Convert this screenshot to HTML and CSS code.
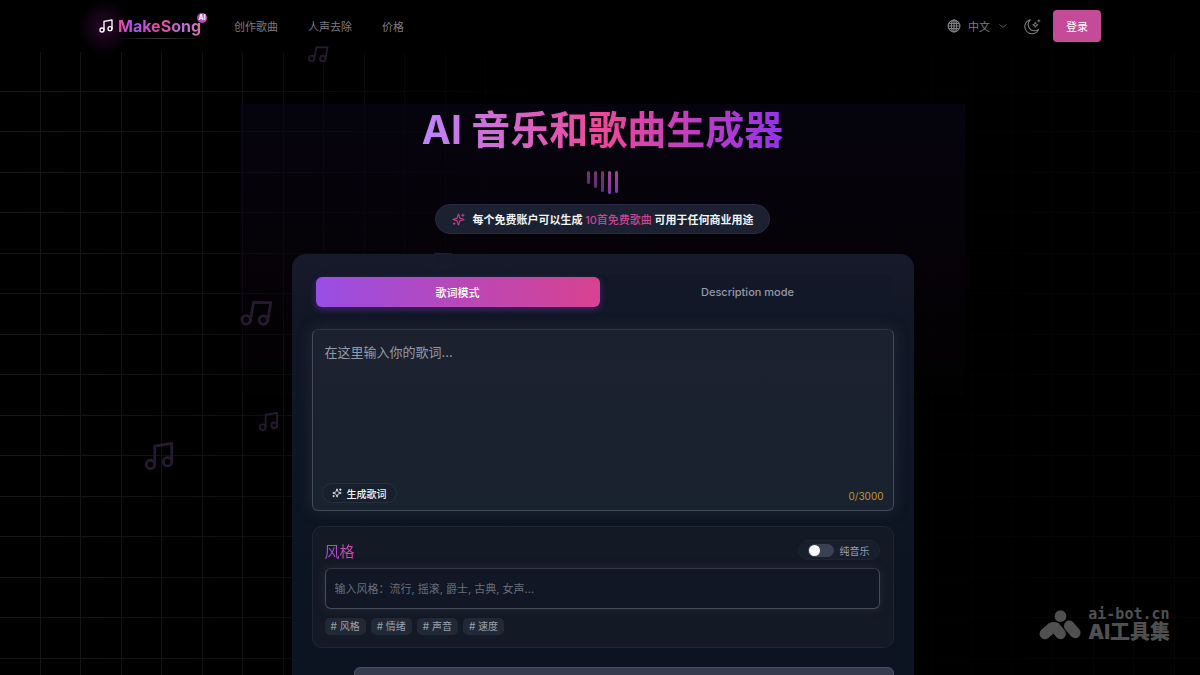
FILE: index.html
```html
<!DOCTYPE html>
<html lang="zh-CN">
<head>
<meta charset="utf-8">
<meta name="viewport" content="width=device-width, initial-scale=1">
<title>MakeSong AI</title>
<link rel="stylesheet" href="styles.css">
</head>
<body>
<svg class="defs" aria-hidden="true">
  <symbol id="note" viewBox="0 0 24 24"><path d="M9 18V5l12-2v13"/><circle cx="6" cy="18" r="3"/><circle cx="18" cy="16" r="3"/></symbol>
  <symbol id="sparkles" viewBox="0 0 24 24"><path d="M9.9 15.5A2 2 0 0 0 8.500 14.100l-6.100-1.600a.5.5 0 0 1 0-1L8.500 9.900A2 2 0 0 0 9.900 8.500l1.600-6.100a.5.5 0 0 1 1 0L14.100 8.500A2 2 0 0 0 15.500 9.900l6.100 1.600a.5.5 0 0 1 0 1L15.500 14.100a2 2 0 0 0-1.400 1.400l-1.600 6.100a.5.5 0 0 1-1 0z"/><path d="M20 2v4M22 4h-4M4 18v3M5.500 19.500h-3"/></symbol>
</svg>
<div class="page">
  <div class="grid"></div>
  <div class="glow"></div>

  <header class="header">
    <div class="bar">
      <a class="brand" href="#">
        <svg class="brand-icon"><use href="#note"/></svg>
        <span class="brand-name">MakeSong</span>
        <span class="brand-tag">AI</span>
      </a>
      <nav class="nav">
        <a href="#">创作歌曲</a>
        <a href="#">人声去除</a>
        <a href="#">价格</a>
      </nav>
      <div class="actions">
        <button class="lang" type="button">
          <svg class="globe" viewBox="0 0 24 24"><circle cx="12" cy="12" r="10"/><ellipse cx="12" cy="12" rx="4.500" ry="10"/><path d="M2 12h20M12 2v20M3.500 7.500h17M3.500 16.500h17"/></svg>
          <span>中文</span>
          <svg class="chevron" viewBox="0 0 12 12"><path d="M1 4l5 4 5-4"/></svg>
        </button>
        <button class="theme" type="button" aria-label="切换主题">
          <svg viewBox="0 0 24 24"><path d="M9 2.500A8 8 0 0 0 20.500 16 10 10 0 1 1 9 2.500z"/><path d="M16 6c.4 2.500 1 3.100 3.500 3.500-2.500.4-3.100 1-3.500 3.500-.4-2.500-1-3.100-3.500-3.500 2.500-.4 3.100-1 3.500-3.500zM21 2.500v3M19.500 4h3"/></svg>
        </button>
        <button class="login" type="button">登录</button>
      </div>
    </div>
  </header>

  <div class="notes" aria-hidden="true">
    <svg class="note n1"><use href="#note"/></svg>
    <svg class="note n2"><use href="#note"/></svg>
    <svg class="note n3"><use href="#note"/></svg>
    <svg class="note n4"><use href="#note"/></svg>
    <svg class="note n5"><use href="#note"/></svg>
  </div>

  <main class="main">
    <h1 class="title">AI 音乐和歌曲生成器</h1>
    <div class="bars" aria-hidden="true"><i></i><i></i><i></i><i></i><i></i></div>
    <p class="offer">
      <svg><use href="#sparkles"/></svg>
      <span>每个免费账户可以生成 <em>10首免费歌曲</em> 可用于任何商业用途</span>
    </p>

    <form class="card">
      <div class="tabs" role="tablist">
        <button class="tab active" type="button" role="tab" aria-selected="true">歌词模式</button>
        <button class="tab" type="button" role="tab" aria-selected="false">Description mode</button>
      </div>
      <div class="lyrics">
        <textarea aria-label="歌词" placeholder="在这里输入你的歌词..."></textarea>
        <div class="lyrics-foot">
          <button class="generate" type="button"><svg><use href="#sparkles"/></svg>生成歌词</button>
          <span class="count">0/3000</span>
        </div>
      </div>
      <section class="style">
        <div class="style-head">
          <label class="style-title" for="style">风格</label>
          <label class="pure"><input type="checkbox" role="switch"><span>纯音乐</span></label>
        </div>
        <input class="style-input" id="style" type="text" placeholder="输入风格：流行, 摇滚, 爵士, 古典, 女声...">
        <div class="tags">
          <button type="button"># 风格</button>
          <button type="button"># 情绪</button>
          <button type="button"># 声音</button>
          <button type="button"># 速度</button>
        </div>
      </section>
      <button class="submit" type="button" aria-label="生成"></button>
    </form>
  </main>

  <div class="watermark">
    <svg viewBox="0 0 44 30"><circle cx="22" cy="6" r="6"/><path d="M6 24L13 18Q15 17 17 18L22 24M31 16L37 23"/></svg>
    <div class="watermark-text"><span class="site">ai-bot.cn</span><span class="name">AI工具集</span></div>
  </div>
</div>
</body>
</html>
```
FILE: styles.css
```css
* { box-sizing: border-box; }

body {
  margin: 0;
  background: #000;
  color: #e5e7eb;
  font-family: Inter, "Noto Sans CJK SC", sans-serif;
  font-size: 11px;
}

button, input, textarea { font: inherit; color: inherit; }
button { border: 0; padding: 0; background: none; cursor: pointer; }
a { color: inherit; text-decoration: none; }
svg { fill: none; stroke: currentColor; stroke-width: 2; stroke-linecap: round; stroke-linejoin: round; flex: none; }

.defs { position: absolute; width: 0; height: 0; }
.page { position: relative; height: 100vh; overflow: hidden; }

/* Backdrop */
.grid {
  position: absolute;
  inset: 0;
  background-image:
    linear-gradient(90deg, transparent 40px, #161618 40px 41px, transparent 41px 80px, #161618 80px),
    linear-gradient(transparent 40px, #161618 40px 41px, transparent 41px 80px, #161618 80px);
  background-size: 81px 81px;
  background-position: 0 51px;
  -webkit-mask-image: linear-gradient(90deg, #000 0, rgba(0, 0, 0, .8) 16%, rgba(0, 0, 0, .25) 36%, transparent 46%, transparent 70%, rgba(0, 0, 0, .3) 100%);
  mask-image: linear-gradient(90deg, #000 0, rgba(0, 0, 0, .8) 16%, rgba(0, 0, 0, .25) 36%, transparent 46%, transparent 70%, rgba(0, 0, 0, .3) 100%);
}
.glow {
  position: absolute;
  top: 104px;
  left: 20%;
  right: 235px;
  height: 292px;
  background: linear-gradient(rgba(10, 6, 24, .55), rgba(11, 4, 16, .5) 50%, rgba(10, 3, 12, .4) 78%, rgba(4, 4, 4, .3));
}
.note { position: absolute; color: #251a31; }
.n1 { left: 307px; top: 43px; width: 22px; height: 22px; transform: rotate(10deg); }
.n2 { left: 239px; top: 296px; width: 34px; height: 34px; transform: rotate(10deg); }
.n3 { left: 257px; top: 410px; width: 23px; height: 23px; }
.n4 { left: 142px; top: 439px; width: 34px; height: 34px; }
.n5 { left: 421px; top: 248px; width: 32px; height: 32px; transform: rotate(10deg); }

/* Header */
.header { position: relative; background: #000; padding: 0 24px; }
.bar { display: flex; align-items: center; max-width: 1004px; height: 52px; margin: 0 auto; padding-right: 1px; }
.brand { position: relative; display: flex; align-items: center; gap: 4px; height: 25px; }
.brand::before {
  content: "";
  position: absolute;
  left: -20px;
  top: -14px;
  width: 54px;
  height: 54px;
  background: radial-gradient(closest-side, rgba(134, 25, 143, .3), transparent);
}
.brand::after {
  content: "";
  position: absolute;
  left: 20px;
  right: 0;
  bottom: 0;
  height: 1px;
  background: linear-gradient(90deg, transparent, #3c3c40, transparent);
}
.brand-icon { position: relative; width: 16px; height: 16px; color: #fff; }
.brand-name {
  position: relative;
  font-size: 16px;
  font-weight: 700;
  background: linear-gradient(90deg, #ec4899, #a855f7 20%, #ec4899 50%, #b070d8 75%, #e070a8);
  -webkit-background-clip: text;
  background-clip: text;
  color: transparent;
}
.brand-tag {
  position: absolute;
  top: -1px;
  right: -6px;
  width: 10px;
  height: 10px;
  border-radius: 50%;
  background: linear-gradient(90deg, #b040c8, #d04ac0);
  color: #fff;
  font-size: 7px;
  font-weight: 700;
  line-height: 10px;
  text-align: center;
}
.nav { display: flex; gap: 30px; margin-left: 33px; color: #7c7c80; }
.actions { display: flex; align-items: center; margin-left: auto; color: #7c7c80; }
.lang { display: flex; align-items: center; gap: 7px; }
.globe { width: 14px; height: 14px; }
.chevron { width: 8px; height: 8px; margin-left: 2px; stroke-width: 1; }
.theme { margin: 0 12px 0 17px; line-height: 0; }
.theme svg { width: 17px; height: 17px; stroke-width: 1.500; }
.login { width: 48px; height: 32px; border-radius: 4px; background: #c54a97; color: #fff; }

/* Hero */
.main { position: relative; display: flex; flex-direction: column; align-items: center; padding: 52px 24px 0; margin-left: 5px; }
.title {
  margin: 0;
  font-size: 39px;
  font-weight: 700;
  line-height: 52px;
  background: linear-gradient(90deg, #c084fc, #ec4899 50%, #9333ea);
  -webkit-background-clip: text;
  background-clip: text;
  color: transparent;
}
.bars { display: flex; gap: 4px; height: 24px; margin-top: 15px; }
.bars i { width: 3px; height: 13px; border-radius: 2px; background: linear-gradient(#a8468c, #7c3aa8); opacity: .75; }
.bars i:nth-child(2) { height: 17px; }
.bars i:nth-child(3) { height: 21px; }
.bars i:nth-child(4) { height: 23px; opacity: 1; }
.bars i:nth-child(5) { height: 22px; opacity: 1; }
.offer {
  display: flex;
  align-items: center;
  gap: 8px;
  height: 30px;
  margin: 9px 0 20px;
  padding: 0 16px;
  border: 1px solid #2c2748;
  border-radius: 15px;
  background: #1b2130;
  color: #f3f4f6;
  font-weight: 700;
}
.offer svg { width: 13px; height: 13px; color: #c23f88; }
.offer em { font-style: normal; font-weight: 500; color: #c94492; }

/* Generator card */
.card {
  display: flex;
  flex-direction: column;
  width: 100%;
  max-width: 622px;
  padding: 19px 20px 40px;
  border-radius: 14px;
  background: linear-gradient(rgba(24, 27, 44, .96), rgba(18, 24, 39, .97) 12%, rgba(13, 21, 35, .98) 60%, #0b1420 70%);
}
.tabs { display: grid; grid-template-columns: 1fr 1fr; gap: 6px; padding: 3px; border: 1px solid #151a2b; border-radius: 10px; background: #121828; }
.tab { height: 30px; border-radius: 6px; color: #949aa8; font-weight: 500; }
.tab.active { background: linear-gradient(90deg, #984ee4, #d8428f); color: #fff; box-shadow: 0 2px 6px rgba(126, 50, 190, .5); }
.lyrics {
  display: flex;
  flex-direction: column;
  height: 182px;
  margin-top: 18px;
  border: 1px solid #434a57;
  border-top-color: #2c353f;
  border-radius: 6px;
  background: linear-gradient(#1c212e, #19222f);
  box-shadow: 0 0 14px rgba(58, 60, 76, .5);
}
.lyrics textarea {
  flex: 1;
  width: 100%;
  padding: 13px 12px;
  border: 0;
  outline: 0;
  resize: none;
  background: none;
  font-size: 13px;
  line-height: 18px;
}
.lyrics textarea::placeholder { color: #949aa5; opacity: 1; }
.lyrics-foot { display: flex; align-items: center; justify-content: space-between; padding: 0 9px 7px; font-size: 10px; }
.generate { display: flex; align-items: center; gap: 5px; height: 20px; padding: 0 9px; border: 1px solid #272f3d; border-radius: 10px; background: #18202d; color: #f3f4f6; font-weight: 500; }
.generate svg { width: 10px; height: 10px; }
.count { padding-top: 6px; color: #bd9738; }

.style { margin-top: 15px; padding: 12px 13px 12px 12px; border: 1px solid #1c2733; border-radius: 10px; background: #141926; }
.style-head { display: flex; align-items: center; justify-content: space-between; height: 22px; }
.style-title {
  font-size: 15px;
  background: linear-gradient(90deg, #9a4fe0, #d9479a);
  -webkit-background-clip: text;
  background-clip: text;
  color: transparent;
}
.pure { display: flex; align-items: center; gap: 6px; height: 20px; padding: 0 9px; border: 1px solid #1e2432; border-radius: 10px; background: #181e2b; color: #9ca0ac; font-size: 10px; }
.pure input { appearance: none; display: flex; align-items: center; width: 26px; height: 13px; margin: 0; padding: 0 1px; border-radius: 7px; background: #3a4154; }
.pure input::before { content: ""; width: 11px; height: 11px; border-radius: 50%; background: #fff; }
.pure input:checked { justify-content: flex-end; }
.style-input {
  display: block;
  width: 100%;
  height: 41px;
  margin-top: 7px;
  padding: 0 9px;
  border: 1px solid #474c5a;
  border-top-color: #333844;
  border-radius: 6px;
  outline: 0;
  background: #111724;
  box-shadow: 0 0 10px rgba(58, 60, 76, .45);
}
.style-input::placeholder { color: #686e7b; opacity: 1; }
.tags { display: flex; gap: 5px; margin-top: 9px; }
.tags button { height: 17px; padding: 0 6px; border-radius: 5px; background: #212836; color: #9ca2ad; font-size: 10px; line-height: 17px; }
.submit { height: 40px; margin: 19px 0 0 42px; border: 1px solid #4a5060; border-radius: 6px; background: #363c4e; }

/* Corner mark */
.watermark { position: absolute; right: 30px; bottom: 33px; display: flex; align-items: center; gap: 6px; color: #505050; }
.watermark svg { width: 43px; height: 30px; stroke-width: 11; }
.watermark circle { fill: currentColor; stroke: none; }
.watermark-text { display: flex; flex-direction: column; }
.site { font: bold 15px/15px "DejaVu Sans Mono", monospace; }
.name { font-size: 20px; font-weight: 900; line-height: 20px; }
```
